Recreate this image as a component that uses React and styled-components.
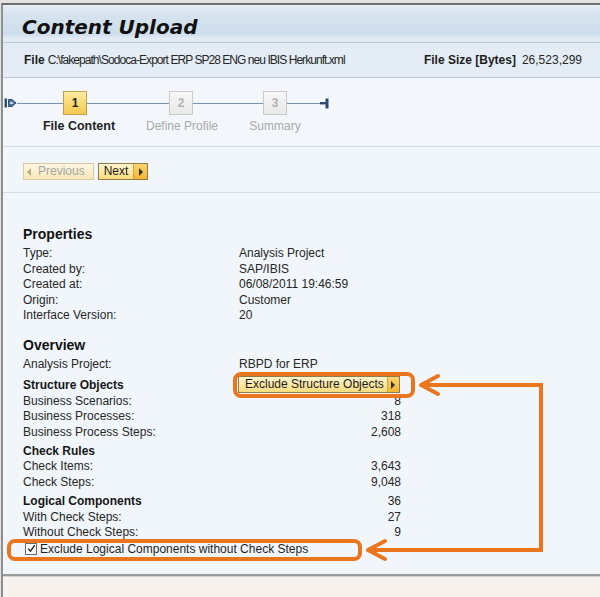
import React from 'react';
import styled, { createGlobalStyle } from 'styled-components';

const GlobalStyle = createGlobalStyle`
  *, *::before, *::after { box-sizing: border-box; }
  html, body { margin: 0; padding: 0; }
  body {
    font-family: "Liberation Sans", Arial, sans-serif;
    font-size: 12px;
    color: #262626;
    background: #e2e2e2;
  }
`;

const ORANGE = '#e9761f';

const Page = styled.div`
  position: relative;
  width: 600px;
  height: 597px;
  padding: 3px 0 0 1px;
  background: #e2e2e2;
  overflow: hidden;
`;

const Frame = styled.div`
  height: 100%;
  display: flex;
  flex-direction: column;
  border-top: 2px solid #6e6e6e;
  border-left: 2px solid #8f8f8f;
  background: #f1f6fb;
`;

const TitleBar = styled.div`
  height: 38px;
  padding: 6px 0 0 19px;
  display: flex;
  align-items: center;
  background: linear-gradient(#e7eef6 0%, #d6e3ef 25%, #cfdeec 80%, #e2ebf4 90%, #e2ebf4 100%);
  border-bottom: 1px solid #b8c9da;
  font-family: "DejaVu Sans", Verdana, sans-serif;
  font-size: 20px;
  font-weight: bold;
  font-style: italic;
  color: #111;
`;

const FileBar = styled.div`
  height: 35px;
  padding: 0 18px 0 21px;
  display: flex;
  align-items: center;
  justify-content: space-between;
  background: #e4edf5;
  border-bottom: 1px solid #bccbda;
`;

const FileGroup = styled.div`
  display: flex;
  gap: ${(p) => p.$gap || 6}px;
`;

const FileLabel = styled.span`
  font-weight: bold;
  color: #1e1e1e;
`;

const FilePath = styled.span`
  font-size: 12px;
  letter-spacing: -0.95px;
`;

const Roadmap = styled.div`
  height: 69px;
  padding-top: 13px;
  display: flex;
  align-items: flex-start;
  background: #f3f7fb;
  border-bottom: 1px solid #d3dde8;
`;

const Track = styled.div`
  width: ${(p) => p.$w}px;
  height: 1px;
  margin-top: 12px;
  background: #7690ad;
`;

const Step = styled.div`
  width: 24px;
  display: flex;
  flex-direction: column;
  align-items: center;
`;

const StepBox = styled.div`
  width: 24px;
  height: 24px;
  display: flex;
  align-items: center;
  justify-content: center;
  font-weight: bold;
  font-size: 12px;
  border: 1px solid ${(p) => (p.$active ? '#c19f4f' : '#c9c9c9')};
  background: ${(p) =>
    p.$active
      ? 'linear-gradient(#fdeaa0, #f4c94f)'
      : 'linear-gradient(#f7f7f7, #e9e9e9)'};
  color: ${(p) => (p.$active ? '#222' : '#b3b3b3')};
`;

const StepLabel = styled.div`
  margin-top: 4px;
  line-height: 14px;
  white-space: nowrap;
  font-size: ${(p) => (p.$active ? 12.5 : 12)}px;
  font-weight: ${(p) => (p.$active ? 'bold' : 'normal')};
  color: ${(p) => (p.$active ? '#1f1f1f' : '#a9a9a9')};
  transform: translateX(${(p) => p.$dx || 0}px);
`;

const ButtonBar = styled.div`
  height: 46px;
  padding: 16px 0 0 20px;
  display: flex;
  align-items: flex-start;
  gap: 4px;
  border-bottom: 1px solid #d3dde8;
`;

const Button = styled.div`
  height: 17px;
  display: inline-flex;
  align-items: stretch;
  border: 1px solid ${(p) => (p.$disabled ? '#d8cba3' : '#8f7c47')};
  background: ${(p) =>
    p.$disabled
      ? 'linear-gradient(#fff8e2, #f6e7b6)'
      : 'linear-gradient(#fff5cf, #f9dc7c)'};
  color: ${(p) => (p.$disabled ? '#a5a5a5' : '#1b1b1b')};
  line-height: 15px;
  white-space: nowrap;
`;

const ButtonText = styled.span`
  padding: 0 ${(p) => p.$pr ?? 6}px 0 ${(p) => p.$pl ?? 6}px;
`;

const ArrowCell = styled.span`
  width: ${(p) => p.$w || 13}px;
  display: flex;
  align-items: center;
  justify-content: center;
  background: ${(p) => (p.$disabled ? 'transparent' : 'linear-gradient(#fbd56d, #f2b533)')};
  border-${(p) => (p.$left ? 'right' : 'left')}: 1px solid
    ${(p) => (p.$disabled ? 'transparent' : '#d9a640')};

  &::before {
    content: '';
    width: 0;
    height: 0;
    border-top: 4px solid transparent;
    border-bottom: 4px solid transparent;
    ${(p) =>
      p.$left
        ? `border-right: 4px solid ${p.$disabled ? '#b5a98a' : '#333'};`
        : `border-left: 4px solid ${p.$disabled ? '#b5a98a' : '#333'};`}
  }
`;

const Content = styled.div`
  flex: 1;
  padding: 32px 0 0 20px;
  border-bottom: 2px solid #9b9b9b;
`;

const Heading = styled.div`
  font-size: 14px;
  font-weight: bold;
  line-height: 18px;
  color: #121212;
  margin: ${(p) => (p.$first ? 0 : 12)}px 0 3px;
`;

const Grid = styled.div`
  display: grid;
  grid-template-columns: 216px 162px;
`;

const Label = styled.div`
  line-height: 15.6px;
  white-space: nowrap;
`;

const Value = styled.div`
  line-height: 15.6px;
  white-space: nowrap;
  text-align: ${(p) => (p.$num ? 'right' : 'left')};
`;

const SubLabel = styled.div`
  display: flex;
  align-items: center;
  height: ${(p) => p.$h || 17}px;
  margin-top: ${(p) => p.$mt ?? 2}px;
  font-weight: bold;
  color: #161616;
`;

const SubValue = styled(SubLabel)`
  font-weight: normal;
  color: #262626;
  justify-content: ${(p) => (p.$num ? 'flex-end' : 'flex-start')};
`;

const CheckRow = styled.label`
  display: flex;
  align-items: center;
  gap: 3px;
  height: 16px;
  margin-left: 2px;
  color: #1e1e1e;
`;

const CheckBox = styled.span`
  width: 12px;
  height: 12px;
  border: 1px solid #6a6a6a;
  background: #fff;
  display: flex;
  align-items: center;
  justify-content: center;
`;

const Footer = styled.div`
  height: 21px;
  border-top: 1px solid #d6d6d6;
  background: #f8f2ee;
`;

const Overlay = styled.svg`
  position: absolute;
  left: 0;
  top: 0;
  pointer-events: none;
`;

const properties = [
  ['Type:', 'Analysis Project'],
  ['Created by:', 'SAP/IBIS'],
  ['Created at:', '06/08/2011 19:46:59'],
  ['Origin:', 'Customer'],
  ['Interface Version:', '20'],
];

const groups = [
  {
    title: 'Check Rules',
    rows: [
      ['Check Items:', '3,643'],
      ['Check Steps:', '9,048'],
    ],
  },
  {
    title: 'Logical Components',
    total: '36',
    rows: [
      ['With Check Steps:', '27'],
      ['Without Check Steps:', '9'],
    ],
  },
];

function StartCap() {
  return (
    <svg width="14" height="24" viewBox="0 0 14 24">
      <rect x="1.5" y="7.5" width="2.5" height="9" fill="#2f507a" />
      <path d="M5.5 8.5 H9 L13 12 L9 15.5 H5.5 Z" fill="#4f7199" stroke="#2f507a" strokeWidth="1" />
      <path d="M7 11 H9.5 L10.5 12 L9.5 13 H7 Z" fill="#c9d8e8" />
    </svg>
  );
}

function EndCap() {
  return (
    <svg width="9" height="24" viewBox="0 0 9 24">
      <rect x="0" y="11" width="6" height="2.4" fill="#2d4b70" />
      <rect x="5.5" y="7.5" width="3" height="10" fill="#2d4b70" />
    </svg>
  );
}

function RoadStep({ n, label, active, dx }) {
  return (
    <Step>
      <StepBox $active={active}>{n}</StepBox>
      <StepLabel $active={active} $dx={dx}>{label}</StepLabel>
    </Step>
  );
}

export default function App() {
  return (
    <>
      <GlobalStyle />
      <Page>
        <Frame>
          <TitleBar>Content Upload</TitleBar>
          <FileBar>
            <FileGroup $gap={3}>
              <FileLabel>File</FileLabel>
              <FilePath>C:\fakepath\Sodoca-Export ERP SP28 ENG neu IBIS Herkunft.xml</FilePath>
            </FileGroup>
            <FileGroup>
              <FileLabel>File Size [Bytes]</FileLabel>
              <span>26,523,299</span>
            </FileGroup>
          </FileBar>

          <Roadmap>
            <StartCap />
            <Track $w={46} />
            <RoadStep n="1" label="File Content" active dx={4} />
            <Track $w={82} />
            <RoadStep n="2" label="Define Profile" dx={1} />
            <Track $w={70} />
            <RoadStep n="3" label="Summary" />
            <Track $w={33} />
            <EndCap />
          </Roadmap>

          <ButtonBar>
            <Button $disabled>
              <ArrowCell $left $disabled $w={11} />
              <ButtonText $pl={3} $pr={8}>Previous</ButtonText>
            </Button>
            <Button>
              <ButtonText $pl={5} $pr={5}>Next</ButtonText>
              <ArrowCell $w={14} />
            </Button>
          </ButtonBar>

          <Content>
            <Heading $first>Properties</Heading>
            <Grid>
              {properties.map(([k, v]) => (
                <React.Fragment key={k}>
                  <Label>{k}</Label>
                  <Value>{v}</Value>
                </React.Fragment>
              ))}
            </Grid>

            <Heading>Overview</Heading>
            <Grid>
              <Label>Analysis Project:</Label>
              <Value>RBPD for ERP</Value>
              <SubLabel $h={18} $mt={3}>Structure Objects</SubLabel>
              <SubValue $h={18} $mt={3}>
                <Button style={{ marginLeft: -1 }}>
                  <ButtonText $pl={6} $pr={3}>Exclude Structure Objects</ButtonText>
                  <ArrowCell $w={12} />
                </Button>
              </SubValue>
              <Label>Business Scenarios:</Label>
              <Value $num>8</Value>
              <Label>Business Processes:</Label>
              <Value $num>318</Value>
              <Label>Business Process Steps:</Label>
              <Value $num>2,608</Value>
              {groups.map((g) => (
                <React.Fragment key={g.title}>
                  <SubLabel>{g.title}</SubLabel>
                  <SubValue $num>{g.total || ''}</SubValue>
                  {g.rows.map(([k, v]) => (
                    <React.Fragment key={k}>
                      <Label>{k}</Label>
                      <Value $num>{v}</Value>
                    </React.Fragment>
                  ))}
                </React.Fragment>
              ))}
            </Grid>
            <CheckRow>
              <CheckBox>
                <svg width="9" height="9" viewBox="0 0 9 9">
                  <path d="M1.2 4.6 L3.5 7.2 L7.8 1.2" fill="none" stroke="#222" strokeWidth="1.4" />
                </svg>
              </CheckBox>
              Exclude Logical Components without Check Steps
            </CheckRow>
          </Content>
          <Footer />
        </Frame>

        <Overlay width="600" height="597" viewBox="0 0 600 597">
          <rect x="235" y="374" width="178" height="22" rx="6" fill="none" stroke={ORANGE} strokeWidth="4" />
          <rect x="9" y="541" width="351" height="18" rx="6" fill="none" stroke={ORANGE} strokeWidth="4" />
          <path d="M422 385 H541 V550 H368" fill="none" stroke={ORANGE} strokeWidth="4" strokeLinejoin="miter" />
          <path d="M438 376 L421 385 L438 394" fill="none" stroke={ORANGE} strokeWidth="4" strokeLinecap="round" strokeLinejoin="round" />
          <path d="M385 541 L368 550 L385 559" fill="none" stroke={ORANGE} strokeWidth="4" strokeLinecap="round" strokeLinejoin="round" />
        </Overlay>
      </Page>
    </>
  );
}
